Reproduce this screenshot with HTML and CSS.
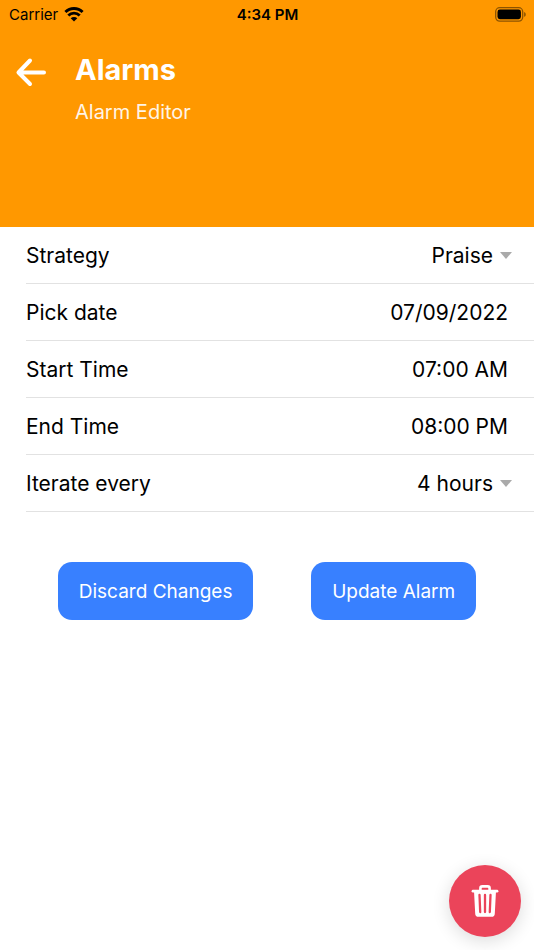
FILE: index.html
```html
<!DOCTYPE html>
<html lang="en">
<head>
    <meta charset="UTF-8">
    <meta name="viewport" content="width=device-width, initial-scale=1.0">
    <title>Alarm Editor</title>
    <link rel="stylesheet" href="styles.css">
</head>
<body>
    <header class="header">
        <div class="status-bar">
            <div class="carrier">
                <span>Carrier</span>
                <svg viewBox="0 0 20 15" width="20" height="15" aria-hidden="true">
                    <path d="M1.4 5a12.2 12.2 0 0 1 17.2 0" fill="none" stroke="#000" stroke-width="2.9"/>
                    <path d="M4.3 8.6a8 8 0 0 1 11.4 0" fill="none" stroke="#000" stroke-width="2.8"/>
                    <path d="M10 14.6 6.7 11.3a4.7 4.7 0 0 1 6.6 0Z" fill="#000"/>
                </svg>
            </div>
            <div class="clock">4:34 PM</div>
            <div class="battery">
                <svg viewBox="0 0 31 15" width="31" height="15" aria-hidden="true">
                    <rect x=".7" y=".7" width="27" height="13.4" rx="4" fill="none" stroke="#000" stroke-opacity=".45" stroke-width="1.3"/>
                    <rect x="2.5" y="2.6" width="23.4" height="9.6" rx="2.4" fill="#000"/>
                    <path d="M29.2 5c2 .8 2 4 0 4.8Z" fill="#000" fill-opacity=".5"/>
                </svg>
            </div>
        </div>
        <div class="toolbar">
            <button class="back" type="button" aria-label="Back">
                <svg viewBox="0 0 32 30" width="32" height="30" aria-hidden="true">
                    <path d="M15 3.5 3.500 15.500 15 27M3.500 15.500H29" fill="none" stroke="#fff" stroke-width="4" stroke-linecap="round" stroke-linejoin="round"/>
                </svg>
            </button>
            <div>
                <h1>Alarms</h1>
                <p>Alarm Editor</p>
            </div>
        </div>
    </header>

    <main>
        <form>
            <div class="item">
                <label for="strategy">Strategy</label>
                <select id="strategy">
                    <option>Praise</option>
                </select>
                <span class="arrow"></span>
            </div>
            <div class="item">
                <label for="date">Pick date</label>
                <input type="text" id="date" value="07/09/2022">
            </div>
            <div class="item">
                <label for="start">Start Time</label>
                <input type="text" id="start" value="07:00 AM">
            </div>
            <div class="item">
                <label for="end">End Time</label>
                <input type="text" id="end" value="08:00 PM">
            </div>
            <div class="item">
                <label for="iterate">Iterate every</label>
                <select id="iterate">
                    <option>4 hours</option>
                </select>
                <span class="arrow"></span>
            </div>
            <div class="actions">
                <button class="btn" type="button">Discard Changes</button>
                <button class="btn" type="button">Update Alarm</button>
            </div>
        </form>
    </main>

    <button class="fab" type="button" aria-label="Delete alarm">
        <svg viewBox="0 0 28 34" width="28" height="34" aria-hidden="true">
            <path d="M9.4 7V4.4a2 2 0 0 1 2-2h5.2a2 2 0 0 1 2 2V7" fill="none" stroke="#fff" stroke-width="2.6"/>
            <path d="M2 7.2h24" stroke="#fff" stroke-width="2.8" stroke-linecap="round"/>
            <path d="M3 7h22l-1.200 22.400a3.400 3.400 0 0 1-3.400 3.400H7.600a3.400 3.400 0 0 1-3.400-3.400Z" fill="#fff"/>
            <path d="m8.500 11 .7 17M14 11v17m5.500-17-.7 17" fill="none" stroke="#eb445a" stroke-width="2.3" stroke-linecap="round"/>
        </svg>
    </button>
</body>
</html>
```

FILE: styles.css
```css
* {
    box-sizing: border-box;
}
body {
    margin: 0;
    min-height: 100vh;
    background: #fff;
    color: #000;
    font-family: Inter, "Liberation Sans", sans-serif;
}
h1, p {
    margin: 0;
}
button {
    border: none;
    font-family: inherit;
    cursor: pointer;
}
.header {
    min-height: 227px;
    background: #ff9800;
}
.status-bar {
    display: grid;
    grid-template-columns: 1fr auto 1fr;
    align-items: center;
    height: 28px;
    padding: 0 8px 0 9px;
    font-size: 15px;
}
.carrier {
    display: flex;
    align-items: center;
    gap: 6px;
}
.clock {
    font-weight: 600;
}
.battery {
    display: flex;
    justify-content: flex-end;
}
.toolbar {
    display: flex;
    align-items: flex-start;
    gap: 28px;
    padding: 23px 15px;
    color: #fff;
}
.back {
    display: flex;
    margin-top: 6px;
    padding: 0;
    background: none;
}
h1 {
    font-size: 29px;
    font-weight: 700;
    line-height: 38px;
}
.toolbar p {
    margin-top: 8px;
    font-size: 20px;
    line-height: 30px;
    opacity: 0.9;
}
.item {
    display: flex;
    align-items: center;
    height: 57px;
    margin-left: 26px;
    padding-right: 26px;
    border-bottom: 1px solid #e2e2e2;
    font-size: 21px;
}
.item input, .item select {
    flex: 1;
    min-width: 0;
    height: 100%;
    padding: 0;
    border: none;
    outline: none;
    background: none;
    color: inherit;
    font: inherit;
    text-align: right;
    text-align-last: right;
    appearance: none;
}
.item:has(select) {
    padding-right: 22px;
}
.arrow {
    margin-left: 7px;
    border: 6px solid transparent;
    border-top: 7px solid #aaa;
    border-bottom: none;
}
.actions {
    display: flex;
    flex-wrap: wrap;
    justify-content: space-evenly;
    margin-top: 50px;
}
.btn {
    height: 58px;
    padding: 0 21px;
    border-radius: 14px;
    background: #3880ff;
    color: #fff;
    font-size: 19px;
}
.fab {
    position: fixed;
    right: 13px;
    bottom: 13px;
    display: flex;
    align-items: center;
    justify-content: center;
    width: 72px;
    height: 72px;
    padding: 0;
    border-radius: 50%;
    background: #eb445a;
    box-shadow: 0 4px 18px rgba(0, 0, 0, 0.14);
}
```
